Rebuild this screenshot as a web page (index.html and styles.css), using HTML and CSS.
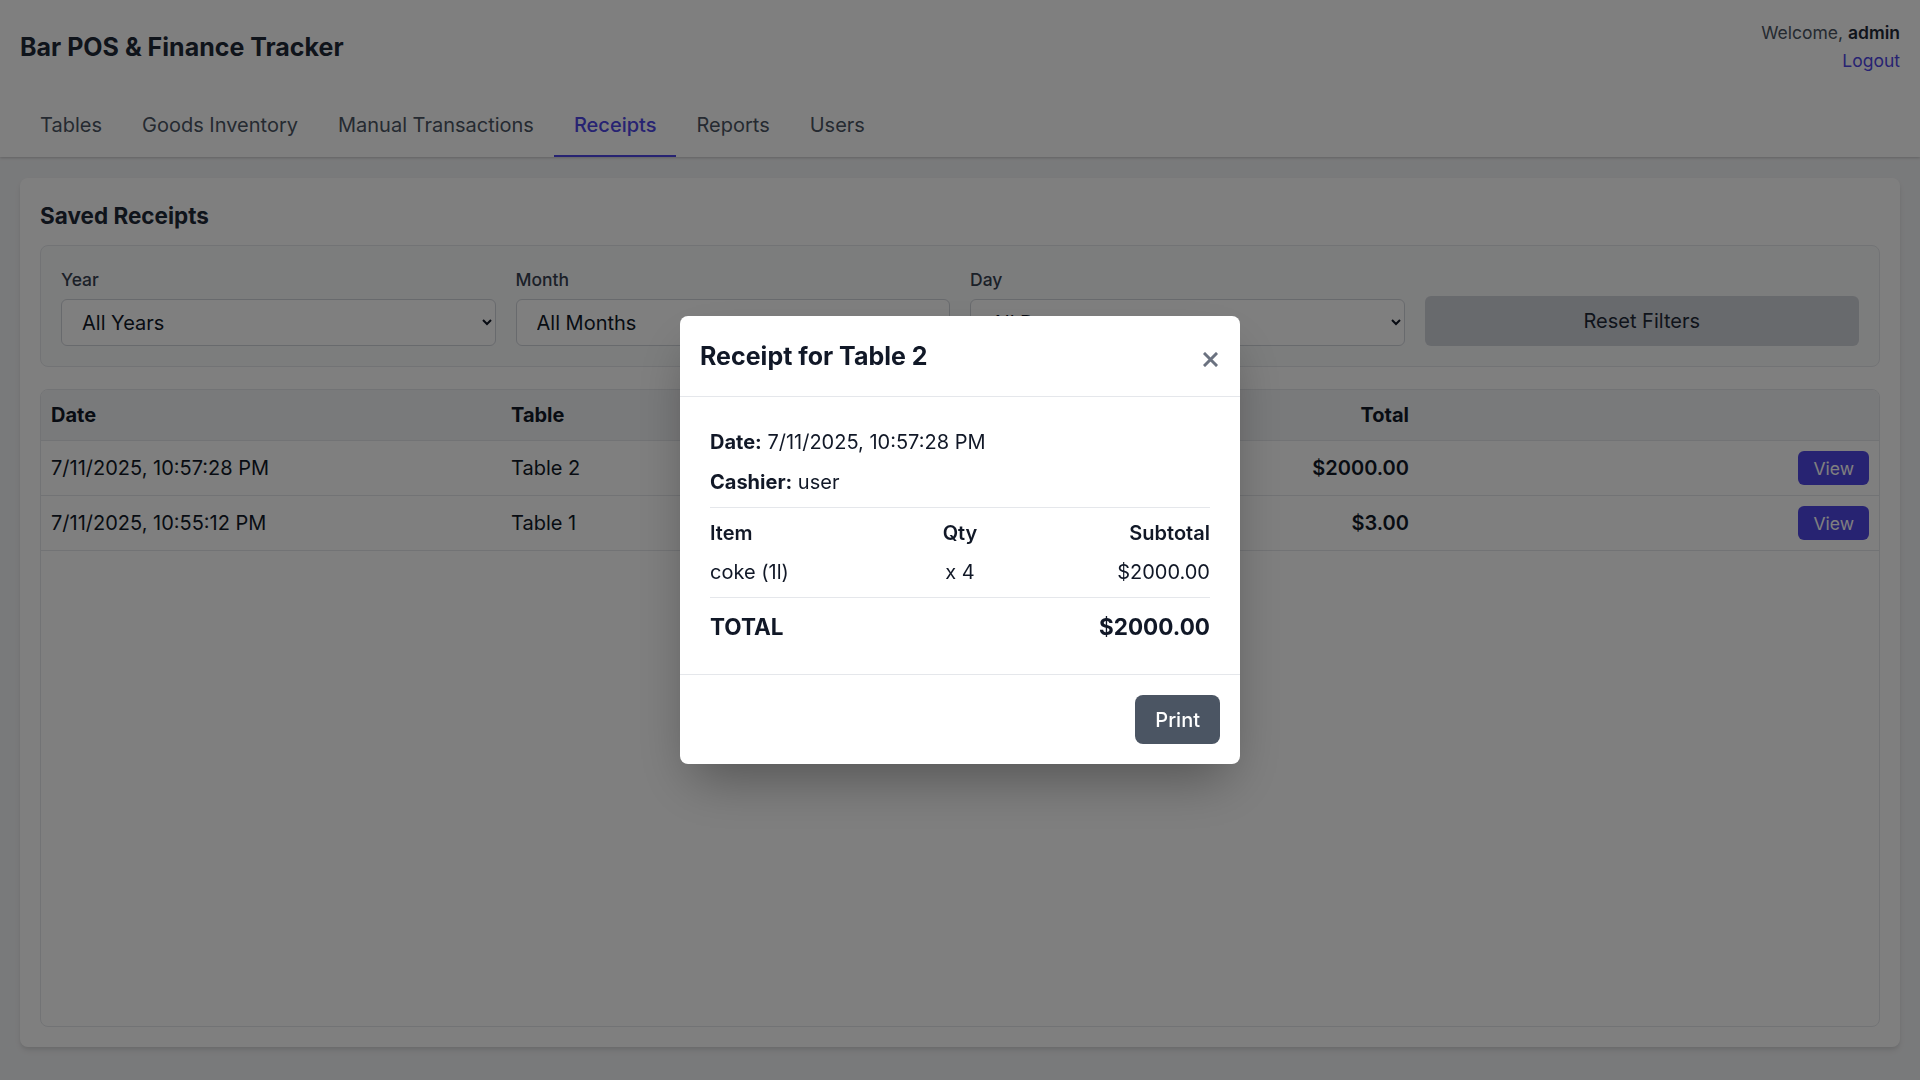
FILE: index.html
```html
<!DOCTYPE html>
<html lang="en">
<head>
<meta charset="utf-8">
<title>Bar POS &amp; Finance Tracker</title>
<link rel="stylesheet" href="styles.css">
</head>
<body>
<header class="topbar">
  <div class="topbar-row">
    <h1 class="brand">Bar POS &amp; Finance Tracker</h1>
    <div class="user">
      <div class="welcome">Welcome, <strong>admin</strong></div>
      <a class="logout" href="#">Logout</a>
    </div>
  </div>
  <nav class="tabs">
    <a class="tab" href="#">Tables</a>
    <a class="tab" href="#">Goods Inventory</a>
    <a class="tab" href="#">Manual Transactions</a>
    <a class="tab active" href="#">Receipts</a>
    <a class="tab" href="#">Reports</a>
    <a class="tab" href="#">Users</a>
  </nav>
</header>

<main class="main">
  <section class="card">
    <h2 class="card-title">Saved Receipts</h2>
    <div class="filters">
      <div class="field">
        <label>Year</label>
        <select><option>All Years</option></select>
      </div>
      <div class="field">
        <label>Month</label>
        <select><option>All Months</option></select>
      </div>
      <div class="field">
        <label>Day</label>
        <select><option>All Days</option></select>
      </div>
      <button class="btn-reset" type="button">Reset Filters</button>
    </div>

    <div class="table-wrap">
      <table class="receipts">
        <colgroup>
          <col class="c-date"><col class="c-table"><col class="c-cashier"><col class="c-total"><col class="c-actions">
        </colgroup>
        <thead>
          <tr><th>Date</th><th>Table</th><th>Cashier</th><th class="num">Total</th><th></th></tr>
        </thead>
        <tbody>
          <tr><td>7/11/2025, 10:57:28 PM</td><td>Table 2</td><td>user</td><td class="num amount">$2000.00</td><td class="act"><button class="btn-view" type="button">View</button></td></tr>
          <tr><td>7/11/2025, 10:55:12 PM</td><td>Table 1</td><td>user</td><td class="num amount">$3.00</td><td class="act"><button class="btn-view" type="button">View</button></td></tr>
        </tbody>
      </table>
    </div>
  </section>
</main>

<div class="overlay">
  <div class="modal">
    <div class="modal-head">
      <h3 class="modal-title">Receipt for Table 2</h3>
      <button class="modal-close" type="button" aria-label="Close">
        <svg width="15" height="15" viewBox="0 0 15 15"><path d="M2 2 L13 13 M13 2 L2 13" stroke="#6b7280" stroke-width="3" stroke-linecap="square" fill="none"/></svg>
      </button>
    </div>
    <div class="modal-body">
      <p class="meta"><strong>Date:</strong> 7/11/2025, 10:57:28 PM</p>
      <p class="meta"><strong>Cashier:</strong> user</p>
      <div class="items">
        <div class="item-row item-head"><span>Item</span><span class="qty">Qty</span><span class="sub">Subtotal</span></div>
        <div class="item-row"><span>coke (1l)</span><span class="qty">x 4</span><span class="sub">$2000.00</span></div>
      </div>
      <div class="total-row"><span>TOTAL</span><span>$2000.00</span></div>
    </div>
    <div class="modal-foot">
      <button class="btn-print" type="button">Print</button>
    </div>
  </div>
</div>
</body>
</html>
```
FILE: styles.css
```css
* { box-sizing: border-box; }

html, body { height: 100%; }

body {
  margin: 0;
  font-family: Inter, "Noto Sans", "Liberation Sans", sans-serif;
  background: #f3f4f6;
  color: #111827;
  display: flex;
  flex-direction: column;
  height: 100vh;
}

a { text-decoration: none; }

/* Header */
.topbar {
  background: #fff;
  padding: 19px 20px 0;
  box-shadow: 0 1px 3px rgba(0,0,0,0.12), 0 1px 2px rgba(0,0,0,0.08);
  position: relative;
  z-index: 1;
}
.topbar-row {
  display: flex;
  justify-content: space-between;
  align-items: center;
  height: 56px;
}
.brand {
  margin: 0;
  font-size: 25px;
  line-height: 35px;
  font-weight: 700;
  color: #1f2937;
}
.user {
  text-align: right;
  font-size: 17.5px;
  line-height: 28px;
  color: #4b5563;
}
.user strong { color: #1f2937; font-weight: 600; }
.logout { display: block; color: #4f46e5; }

.tabs {
  display: flex;
  margin-top: 22px;
}
.tab {
  padding: 13px 20px 15px;
  font-size: 20px;
  line-height: 30px;
  color: #4b5563;
  border-bottom: 2px solid transparent;
}
.tab.active {
  color: #4f46e5;
  font-weight: 500;
  border-bottom-color: #4f46e5;
}

/* Main */
.main {
  flex: 1;
  display: flex;
  padding: 21px 20px 33px;
  min-height: 0;
}
.card {
  flex: 1;
  display: flex;
  flex-direction: column;
  background: #fff;
  border-radius: 8px;
  padding: 20px;
  box-shadow: 0 4px 6px -1px rgba(0,0,0,0.1), 0 2px 4px -1px rgba(0,0,0,0.06);
}
.card-title {
  margin: 0 0 12px;
  font-size: 22.5px;
  line-height: 35px;
  font-weight: 700;
  color: #1f2937;
}

.filters {
  display: grid;
  grid-template-columns: repeat(4, 1fr);
  gap: 20px;
  align-items: end;
  padding: 21px 20px 20px;
  border: 1px solid #e5e7eb;
  border-radius: 8px;
  background: #f9fafb;
}
.field label {
  display: block;
  font-size: 17.5px;
  line-height: 25px;
  font-weight: 500;
  color: #374151;
  margin-bottom: 7px;
}
.field select {
  width: 100%;
  height: 47px;
  border: 1px solid #d1d5db;
  border-radius: 6px;
  background: #fff;
  font-family: inherit;
  font-size: 20px;
  color: #111827;
  padding: 0 12px 0 16px;
}
.btn-reset {
  height: 50px;
  border: 0;
  border-radius: 6px;
  background: #d1d5db;
  color: #1f2937;
  font-family: inherit;
  font-size: 20px;
}

.table-wrap {
  flex: 1;
  margin-top: 22px;
  border: 1px solid #e5e7eb;
  border-radius: 8px;
  overflow: hidden;
}
.receipts {
  width: 100%;
  border-collapse: collapse;
  table-layout: fixed;
  font-size: 20px;
}
.c-date { width: 460px; }
.c-table { width: 300px; }
.c-cashier { width: 300px; }
.c-total { width: 318px; }
.c-actions { width: 460px; }
.receipts th {
  background: #f3f4f6;
  text-align: left;
  font-weight: 700;
  line-height: 30px;
  padding: 10px;
  border-bottom: 1px solid #e5e7eb;
  color: #111827;
}
.receipts td {
  padding: 10px;
  line-height: 30px;
  border-bottom: 1px solid #e5e7eb;
  color: #111827;
}
.receipts .num { text-align: right; }
.receipts .amount { font-weight: 600; }
.receipts .act { text-align: right; }
.btn-view {
  height: 34px;
  padding: 0 15px;
  border: 0;
  border-radius: 6px;
  background: #4f46e5;
  color: #fff;
  font-family: inherit;
  font-size: 17.5px;
  vertical-align: middle;
}

/* Modal */
.overlay {
  position: fixed;
  inset: 0;
  background: rgba(0,0,0,0.5);
  display: flex;
  align-items: center;
  justify-content: center;
  z-index: 10;
}
.modal {
  width: 560px;
  background: #fff;
  border-radius: 8px;
  box-shadow: 0 25px 50px -12px rgba(0,0,0,0.35);
}
.modal-head {
  display: flex;
  justify-content: space-between;
  align-items: center;
  padding: 23px 22px 22px 20px;
  border-bottom: 1px solid #e5e7eb;
}
.modal-title {
  margin: 0;
  font-size: 25px;
  line-height: 35px;
  font-weight: 700;
  color: #111827;
}
.modal-close {
  border: 0;
  background: none;
  padding: 0;
  margin-top: 6px;
  width: 15px;
  height: 15px;
  display: flex;
}
.modal-body {
  padding: 30px;
  font-size: 20px;
  line-height: 30px;
  color: #111827;
}
.meta { margin: 0 0 10px; }
.items {
  border-top: 1px solid #e5e7eb;
  border-bottom: 1px solid #e5e7eb;
  padding: 10px 0;
  display: flex;
  flex-direction: column;
  gap: 9px;
}
.item-row {
  display: grid;
  grid-template-columns: 1fr 1fr 1fr;
}
.item-head { font-weight: 600; }
.item-row .qty { text-align: center; }
.item-row .sub { text-align: right; }
.total-row {
  display: flex;
  justify-content: space-between;
  margin-top: 11px;
  font-size: 22.5px;
  line-height: 35px;
  font-weight: 700;
}
.modal-foot {
  display: flex;
  justify-content: flex-end;
  padding: 20px;
  border-top: 1px solid #e5e7eb;
}
.btn-print {
  height: 49px;
  padding: 0 20px;
  border: 0;
  border-radius: 8px;
  background: #4b5563;
  color: #fff;
  font-family: inherit;
  font-size: 20px;
  font-weight: 500;
}
```
